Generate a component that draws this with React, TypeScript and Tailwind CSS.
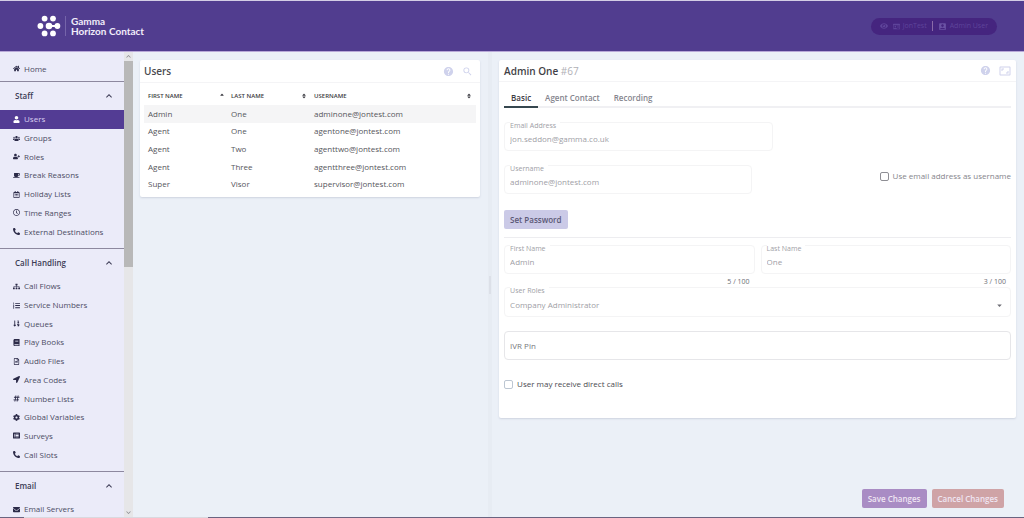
import type { ReactNode } from "react";
import type { IconType } from "react-icons";
import {
  FaHome, FaUser, FaUsers, FaUserPlus, FaCoffee, FaRegCalendarAlt, FaRegClock, FaPhoneAlt,
  FaSitemap, FaListOl, FaSortNumericDown, FaBook, FaRegFileAlt, FaLocationArrow, FaHashtag,
  FaCog, FaListAlt, FaEnvelope, FaSortUp, FaSort, FaEye, FaRegIdCard,
} from "react-icons/fa";
import { MdHelp, MdSearch, MdAspectRatio, MdKeyboardArrowUp, MdKeyboardArrowDown, MdArrowDropDown, MdAccountBox } from "react-icons/md";

type NavEntry = { label: string; icon: IconType; active?: boolean };

const staff: NavEntry[] = [
  { label: "Users", icon: FaUser, active: true },
  { label: "Groups", icon: FaUsers },
  { label: "Roles", icon: FaUserPlus },
  { label: "Break Reasons", icon: FaCoffee },
  { label: "Holiday Lists", icon: FaRegCalendarAlt },
  { label: "Time Ranges", icon: FaRegClock },
  { label: "External Destinations", icon: FaPhoneAlt },
];

const callHandling: NavEntry[] = [
  { label: "Call Flows", icon: FaSitemap },
  { label: "Service Numbers", icon: FaListOl },
  { label: "Queues", icon: FaSortNumericDown },
  { label: "Play Books", icon: FaBook },
  { label: "Audio Files", icon: FaRegFileAlt },
  { label: "Area Codes", icon: FaLocationArrow },
  { label: "Number Lists", icon: FaHashtag },
  { label: "Global Variables", icon: FaCog },
  { label: "Surveys", icon: FaListAlt },
  { label: "Call Slots", icon: FaPhoneAlt },
];

const users = [
  ["Admin", "One", "adminone@jontest.com"],
  ["Agent", "One", "agentone@jontest.com"],
  ["Agent", "Two", "agenttwo@jontest.com"],
  ["Agent", "Three", "agentthree@jontest.com"],
  ["Super", "Visor", "supervisor@jontest.com"],
];

function Logo() {
  return (
    <svg viewBox="0 0 24 22" className="h-[22px] w-6" fill="#fff" aria-hidden="true">
      <circle cx="7.6" cy="3.6" r="2.9" />
      <circle cx="16" cy="3.6" r="2.9" />
      <circle cx="3.4" cy="11" r="2.9" />
      <circle cx="12" cy="11" r="3.3" />
      <circle cx="20.4" cy="11" r="2.9" />
      <rect x="12" y="10" width="8" height="2" />
      <circle cx="7.6" cy="18.4" r="2.9" />
      <circle cx="16" cy="18.4" r="2.9" />
    </svg>
  );
}

function NavItem({ label, icon: Icon, active }: NavEntry) {
  return (
    <li className="flex">
      <a
        href="#"
        className={
          active
            ? "flex flex-1 items-center gap-1 bg-[#533c94] pl-[13px] text-[#d9cff0]"
            : "flex flex-1 items-center gap-1 pl-[13px] text-[#4c4c64]"
        }
      >
        <Icon className={active ? "size-[7px] text-white" : "size-[7px] text-[#2b2a48]"} />
        {label}
      </a>
    </li>
  );
}

function NavSection({ title, children }: { title: string; children: ReactNode }) {
  return (
    <section className="border-t border-[#8d889f] pb-[7px]">
      <h2>
        <button type="button" className="flex h-7 w-full items-center justify-between pr-[9px] pl-[15px] font-semibold text-[#3c3b55]">
          {title}
          <MdKeyboardArrowUp className="size-3" />
        </button>
      </h2>
      {children}
    </section>
  );
}

function Field({ id, label, value }: { id: string; label: string; value: string }) {
  return (
    <div className="flex h-[29px] flex-col items-start rounded-sm border border-[#f4f4f5] px-[5px]">
      <label htmlFor={id} className="-mt-px bg-white pr-1 text-[7px] leading-2 text-[#a0a0a6]">{label}</label>
      <input id={id} defaultValue={value} className="h-4 w-full text-[#a0a0a6] outline-none" />
    </div>
  );
}

export default function App() {
  return (
    <div className="flex h-screen flex-col overflow-hidden bg-[#ebf0f7] font-['Open_Sans',sans-serif] text-[8px] leading-3">
      <header className="flex h-[52px] shrink-0 items-center justify-between border-y border-t-[#d3cde5] border-b-[#b9a9d8] bg-[#513d8f] pr-[27px] pl-[37px]">
        <div className="flex items-center gap-1">
          <Logo />
          <div className="flex flex-col justify-center border-l border-[#7564aa] pl-[5px] font-['Lato',sans-serif] text-[10px] leading-[10px] font-bold text-[#f1edfa]">
            <span>Gamma</span>
            <span>Horizon Contact</span>
          </div>
        </div>
        <div className="flex h-[17px] items-center gap-[3px] rounded-full bg-[#45257f] px-[9px] text-[7px] text-[#5e449a]">
          <FaEye className="mr-[2px] size-[8px]" />
          <FaRegIdCard className="size-[7px]" />
          <span>JonTest</span>
          <span className="mx-[2px] h-[10px] w-px bg-[#8a6aa8]" />
          <MdAccountBox className="size-[9px] text-[#6a52a4]" />
          <span>Admin User</span>
        </div>
      </header>

      <div className="flex min-h-0 flex-1">
        <nav className="w-[124px] shrink-0 overflow-hidden bg-[#ebebf9]">
          <ul className="grid h-[29px] pt-1">
            <NavItem label="Home" icon={FaHome} />
          </ul>
          <NavSection title="Staff">
            <ul className="grid h-[131px] auto-rows-fr">
              {staff.map((e) => <NavItem key={e.label} {...e} />)}
            </ul>
          </NavSection>
          <NavSection title="Call Handling">
            <ul className="grid h-[187px] auto-rows-fr">
              {callHandling.map((e) => <NavItem key={e.label} {...e} />)}
            </ul>
          </NavSection>
          <NavSection title="Email">
            <ul className="grid h-[18px]">
              <NavItem label="Email Servers" icon={FaEnvelope} />
            </ul>
          </NavSection>
        </nav>
        <div className="flex w-[9px] shrink-0 flex-col items-center bg-[#e6e6e8] text-[#8b8b8f]">
          <MdKeyboardArrowUp className="size-[9px]" />
          <div className="h-[206px] w-full bg-[#b8b8b8]" />
          <MdKeyboardArrowDown className="mt-auto size-[9px]" />
        </div>

        <main className="flex min-w-0 flex-1">
          <div className="flex-[352] pt-2 pr-2 pl-[7px]">
            <section className="rounded-xs bg-white pb-1 shadow-[0_1px_2px_#cdd3df]">
              <div className="flex h-[23px] items-center justify-between border-b border-[#f4f4f6] pr-[7px] pl-1">
                <h1 className="text-[10px] font-semibold text-[#4a4a50]">Users</h1>
                <div className="flex items-center gap-2 text-[#cfd2ec]">
                  <button type="button" aria-label="Help"><MdHelp className="size-[11px]" /></button>
                  <button type="button" aria-label="Search"><MdSearch className="size-[11px]" /></button>
                </div>
              </div>
              <div className="px-1">
                <table className="h-[110px] w-full table-fixed text-left text-[#55555b]">
                  <thead>
                    <tr className="h-[22px] text-[6px] text-[#3b3b42]">
                      <th className="w-1/4 pt-1 pl-1 font-semibold"><span className="flex items-center justify-between">FIRST NAME<FaSortUp className="mr-[2px] size-[6px]" /></span></th>
                      <th className="w-1/4 pt-1 pl-1 font-semibold"><span className="flex items-center justify-between">LAST NAME<FaSort className="mr-[3px] size-[6px]" /></span></th>
                      <th className="w-1/2 pt-1 pl-1 font-semibold"><span className="flex items-center justify-between">USERNAME<FaSort className="mr-1 size-[6px]" /></span></th>
                    </tr>
                  </thead>
                  <tbody>
                    {users.map(([first, last, name]) => (
                      <tr key={name} className="first:bg-[#f5f5f6]">
                        <td className="pl-1">{first}</td>
                        <td className="pl-1">{last}</td>
                        <td className="pl-1">{name}</td>
                      </tr>
                    ))}
                  </tbody>
                </table>
              </div>
            </section>
          </div>

          <div className="flex w-1 shrink-0 items-center justify-center bg-[#e7ecf3]">
            <div className="h-[18px] w-[2px] bg-[#dce0e8]" />
          </div>

          <div className="flex flex-[535] flex-col pt-2 pr-2 pl-[7px]">
            <section className="rounded-xs bg-white pb-7 shadow-[0_1px_2px_#cdd3df]">
              <div className="flex h-[22px] items-center justify-between border-b border-[#f4f4f6] px-[5px]">
                <h2 className="text-[10px] font-semibold text-[#3f3f46]">Admin One <span className="font-normal text-[#b0b0b6]">#67</span></h2>
                <div className="flex items-center gap-2 text-[#cfd2ec]">
                  <button type="button" aria-label="Help"><MdHelp className="size-[11px]" /></button>
                  <button type="button" aria-label="Expand"><MdAspectRatio className="size-[12px]" /></button>
                </div>
              </div>
              <div className="px-[5px]">
                <div className="flex h-[26px] items-end border-b-2 border-[#f0f0f3] font-semibold text-[#85858e]">
                  <button type="button" className="-mb-[2px] border-b-2 border-[#36474f] px-[7px] pb-[2px] text-[#3b3b42]">Basic</button>
                  <button type="button" className="px-[7px] pb-[2px]">Agent Contact</button>
                  <button type="button" className="px-[7px] pb-[2px]">Recording</button>
                </div>

                <div className="mt-[14px] w-[53%]"><Field id="email" label="Email Address" value="jon.seddon@gamma.co.uk" /></div>

                <div className="mt-[14px] flex items-start justify-between">
                  <div className="w-[49%]"><Field id="username" label="Username" value="adminone@jontest.com" /></div>
                  <label className="flex items-center gap-1 pt-[5px] text-[#85858b]">
                    <input type="checkbox" className="size-[9px] appearance-none rounded-xs border border-[#8e8e94]" />
                    Use email address as username
                  </label>
                </div>

                <button type="button" className="mt-4 h-[19px] rounded-xs bg-[#cbcae7] px-1.5 font-semibold text-[#5a5876]">Set Password</button>

                <div className="mt-2 grid grid-cols-2 gap-x-[6px] border-t border-[#ededf0] pt-[7px]">
                  <div>
                    <Field id="first" label="First Name" value="Admin" />
                    <p className="h-[13px] pt-[2px] pr-[5px] text-right text-[7px] text-[#6d6d74]">5 / 100</p>
                  </div>
                  <div>
                    <Field id="last" label="Last Name" value="One" />
                    <p className="h-[13px] pt-[2px] pr-[5px] text-right text-[7px] text-[#6d6d74]">3 / 100</p>
                  </div>
                </div>

                <div className="flex h-[30px] flex-col items-start rounded-sm border border-[#f4f4f5] px-[5px]">
                  <label htmlFor="roles" className="-mt-px bg-white pr-1 text-[7px] leading-2 text-[#a0a0a6]">User Roles</label>
                  <div className="flex w-full items-center">
                    <select id="roles" className="h-5 flex-1 appearance-none text-[#a0a0a6] outline-none">
                      <option>Company Administrator</option>
                    </select>
                    <MdArrowDropDown className="size-[11px] text-[#6d6d74]" />
                  </div>
                </div>

                <input aria-label="IVR Pin" placeholder="IVR Pin" className="mt-[14px] block h-[29px] w-full rounded-sm border border-[#e6e6e9] px-[5px] outline-none placeholder:text-[#77777d]" />

                <label className="mt-[18px] flex items-center gap-1 text-[#4a4a50]">
                  <input type="checkbox" className="size-[9px] appearance-none rounded-xs border border-[#bcc6d2]" />
                  User may receive direct calls
                </label>
              </div>
            </section>
            <div className="mt-auto flex justify-end gap-[5px] pr-3 pb-[9px] font-semibold text-[#f0e6f3]">
              <button type="button" className="h-[19px] rounded-xs bg-[#a98cc4] px-1.5">Save Changes</button>
              <button type="button" className="h-[19px] rounded-xs bg-[#cfa3a6] px-1.5">Cancel Changes</button>
            </div>
          </div>
        </main>
      </div>
      <footer className="flex h-px shrink-0 bg-[#6a6480]">
        <div className="ml-6 w-[18%] bg-[#d9d9df]" />
      </footer>
    </div>
  );
}
